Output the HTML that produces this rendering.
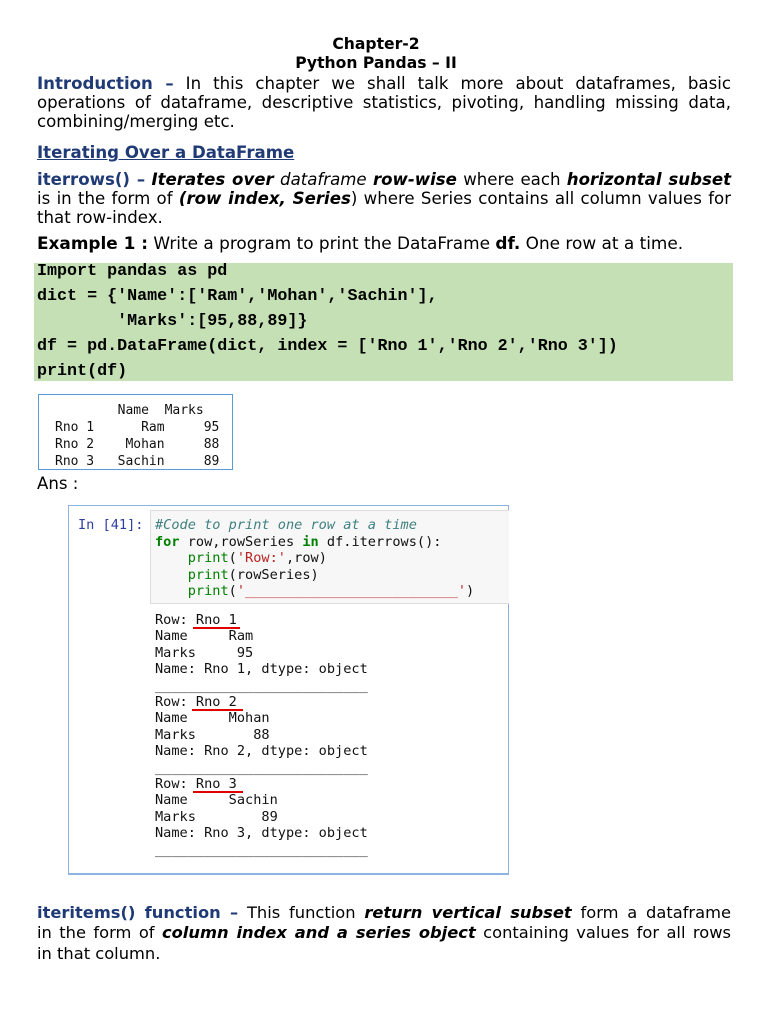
<!DOCTYPE html>
<html><head><meta charset="utf-8"><style>
body{margin:0;width:768px;height:1024px;background:#fff;position:relative;overflow:hidden;font-family:"DejaVu Sans","Liberation Sans",sans-serif;color:#000}
.l{position:absolute;left:37px;width:694px;font-size:16.6px;line-height:19px;white-space:nowrap}
.j{text-align:justify;text-align-last:justify;white-space:normal}
.c{text-align:center;font-weight:bold;left:0;width:752px;font-size:15.6px}
.b{color:#1f3a75;font-weight:bold}
.cd{position:absolute;left:37px;font-family:"Liberation Mono",monospace;font-weight:bold;font-size:16.7px;line-height:20px;white-space:pre}
.o{position:absolute;font-family:"DejaVu Sans Mono",monospace;font-size:13.6px;line-height:16px;white-space:pre;color:#111}
.ru{position:absolute;height:2px;background:#e00000}
.t{position:absolute;font-family:"DejaVu Sans Mono",monospace;font-size:13px;line-height:17px;white-space:pre;color:#111}
.bt{position:absolute;left:37px;width:694px;font-family:"DejaVu Sans",sans-serif;font-size:16.3px;line-height:20px;white-space:nowrap}
</style></head><body>
<div class="l c" style="top:35px">Chapter-2</div>
<div class="l c" style="top:54px">Python Pandas – II</div>
<div class="l j" style="top:74px"><span class="b">Introduction –</span> In this chapter we shall talk more about dataframes, basic</div>
<div class="l j" style="top:93px">operations of dataframe, descriptive statistics, pivoting, handling missing data,</div>
<div class="l" style="top:112px">combining/merging etc.</div>
<div class="l b" style="top:143px;text-decoration:underline">Iterating Over a DataFrame</div>
<div class="l j" style="top:170px"><span class="b">iterrows() –</span> <b><i>Iterates over</i></b> <i>dataframe</i> <b><i>row-wise</i></b> where each <b><i>horizontal subset</i></b></div>
<div class="l j" style="top:189px">is in the form of <b><i>(row index, Series</i></b>) where Series contains all column values for</div>
<div class="l" style="top:208px">that row-index.</div>
<div class="l" style="top:234px;font-size:16.9px"><b>Example 1 :</b> Write a program to print the DataFrame <b>df.</b> One row at a time.</div>
<div style="position:absolute;left:34px;top:263px;width:699px;height:118px;background:#c5e0b4"></div>
<div class="cd" style="top:262px">Import pandas as pd</div>
<div class="cd" style="top:287px">dict = {'Name':['Ram','Mohan','Sachin'],</div>
<div class="cd" style="top:312px">        'Marks':[95,88,89]}</div>
<div class="cd" style="top:337px">df = pd.DataFrame(dict, index = ['Rno 1','Rno 2','Rno 3'])</div>
<div class="cd" style="top:362px">print(df)</div>
<div style="position:absolute;left:38px;top:394px;width:193px;height:74px;border:1px solid #5b9bd5"></div>
<div class="t" style="left:55px;top:402px">        Name  Marks
Rno 1      Ram     95
Rno 2    Mohan     88
Rno 3   Sachin     89</div>
<div class="l" style="top:474px">Ans :</div>
<div style="position:absolute;left:68px;top:505px;width:439px;height:367px;border:1px solid #8db3e2;border-bottom:2px solid #8db3e2"></div>
<div style="position:absolute;left:150px;top:510px;width:358px;height:92px;background:#f7f7f7;border:1px solid #ddd;border-right:none"></div>
<div class="o" style="left:78px;top:517px;color:#303f9f">In [41]:</div>
<div class="o" style="left:155px;top:517px;line-height:16.5px"><i style="color:#408080">#Code to print one row at a time</i>
<b style="color:#008000">for</b> row,rowSeries <b style="color:#008000">in</b> df.iterrows():
    <span style="color:#008000">print</span>(<span style="color:#ba2121">'Row:'</span>,row)
    <span style="color:#008000">print</span>(rowSeries)
    <span style="color:#008000">print</span>(<span style="color:#ba2121">'__________________________'</span>)</div>
<div class="o" style="left:155px;top:612px;line-height:16.4px">Row: Rno 1
Name     Ram
Marks     95
Name: Rno 1, dtype: object
__________________________
Row: Rno 2
Name     Mohan
Marks       88
Name: Rno 2, dtype: object
__________________________
Row: Rno 3
Name     Sachin
Marks        89
Name: Rno 3, dtype: object
__________________________</div>
<div class="ru" style="left:193px;top:627px;width:47px"></div>
<div class="ru" style="left:192px;top:709px;width:51px"></div>
<div class="ru" style="left:193px;top:791px;width:50px"></div>
<div class="bt j" style="top:903px"><span class="b">iteritems() function –</span> This function <b><i>return vertical subset</i></b> form a dataframe</div>
<div class="bt j" style="top:923px">in the form of <b><i>column index and a series object</i></b> containing values for all rows</div>
<div class="bt" style="top:944px">in that column.</div>
</body></html>
